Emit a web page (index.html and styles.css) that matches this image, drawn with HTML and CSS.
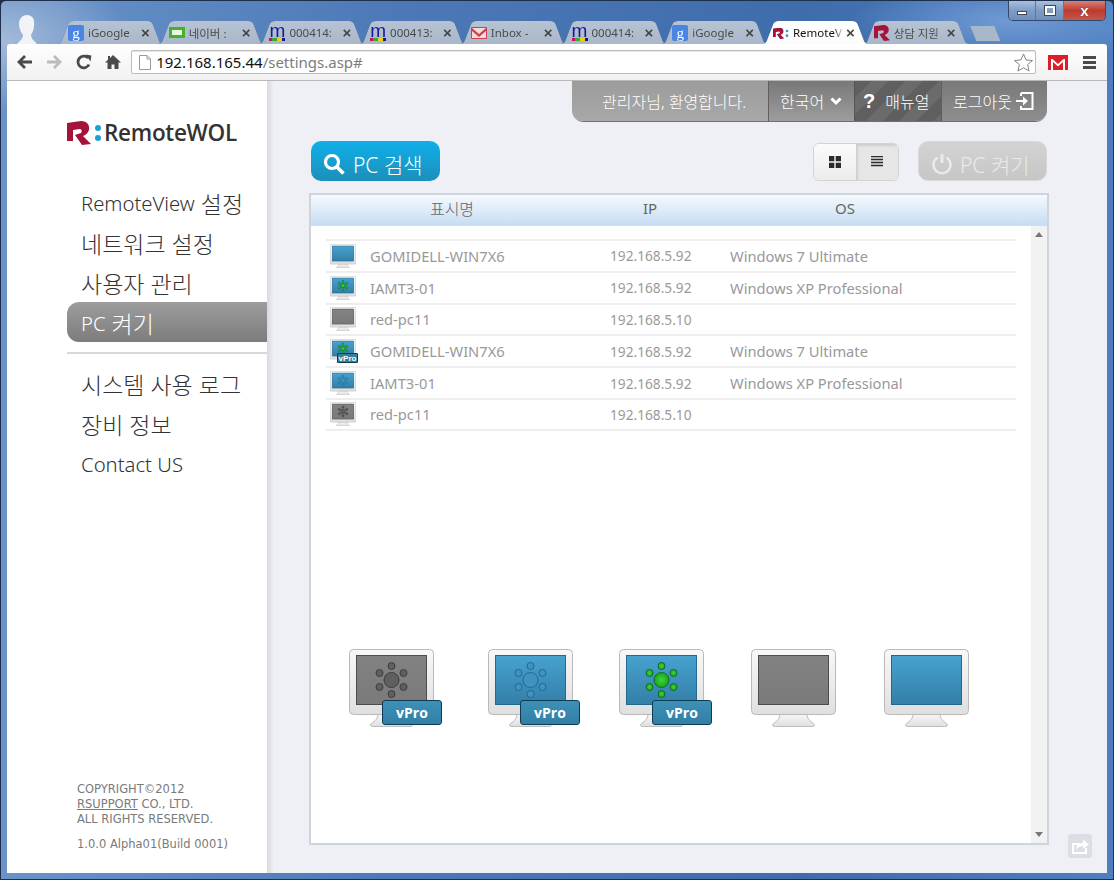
FILE: index.html
```html
<!DOCTYPE html>
<html lang="ko">
<head>
<meta charset="utf-8">
<title>RemoteWOL</title>
<link rel="stylesheet" href="styles.css">
</head>
<body>
<svg class="defs" width="0" height="0">
	<defs>
		<linearGradient id="g-body" x1="0" y1="0" x2="0" y2="1"><stop offset="0" stop-color="#f8f8f8"/><stop offset="1" stop-color="#dfdfdf"/></linearGradient>
		<linearGradient id="g-blue" x1="0" y1="0" x2="0" y2="1"><stop offset="0" stop-color="#47a2cf"/><stop offset="1" stop-color="#337fa8"/></linearGradient>
		<linearGradient id="g-grey" x1="0" y1="0" x2="0" y2="1"><stop offset="0" stop-color="#828282"/><stop offset="1" stop-color="#7a7a7a"/></linearGradient>
		<radialGradient id="g-green"><stop offset="0" stop-color="#3fd63f"/><stop offset="1" stop-color="#18a518"/></radialGradient>
		<symbol id="mon-base" viewBox="0 0 85 78">
			<path d="M29 65 C29 71 24 73 22 75 C21 77 22 77.500 24 77.500 H61 C63 77.500 64 77 63 75 C61 73 56 71 56 65 Z" fill="url(#g-body)" stroke="#bdbdbd"/>
			<rect x="0.500" y="0.500" width="84" height="65" rx="4" fill="url(#g-body)" stroke="#b9b9b9"/>
		</symbol>
		<symbol id="mon-blue" viewBox="0 0 85 78">
			<use href="#mon-base"/>
			<rect x="7.500" y="6.500" width="70" height="49" fill="url(#g-blue)" stroke="#23688e"/>
		</symbol>
		<symbol id="mon-grey" viewBox="0 0 85 78">
			<use href="#mon-base"/>
			<rect x="7.500" y="6.500" width="70" height="49" fill="url(#g-grey)" stroke="#4c4c4c"/>
		</symbol>
		<g id="nodes">
			<circle cx="42.500" cy="17" r="3.500"/><circle cx="42.500" cy="45" r="3.500"/>
			<circle cx="30.500" cy="24" r="3.500"/><circle cx="54.500" cy="24" r="3.500"/>
			<circle cx="30.500" cy="38" r="3.500"/><circle cx="54.500" cy="38" r="3.500"/>
			<circle cx="42.500" cy="31" r="7.500"/>
		</g>
		<symbol id="nodes-grey" viewBox="0 0 85 78"><use href="#nodes" fill="#5f5f5f" stroke="#3d3d3d"/></symbol>
		<symbol id="nodes-blue" viewBox="0 0 85 78"><use href="#nodes" fill="#3f94bf" stroke="#23688e"/></symbol>
		<symbol id="nodes-green" viewBox="0 0 85 78"><use href="#nodes" fill="url(#g-green)" stroke="#0d6e2a"/></symbol>
		<symbol id="r-mark" viewBox="0 0 24 24">
			<path d="M0 2 L14 0 C20 0 23 4 22 9 C21 12 19 14 16 15 L24 23 L15 24 L8 14 L14 12 C15 11 15 8 13 8 L6 9 L6 20 L0 20 Z" fill="#a5123a"/>
		</symbol>
	</defs>
</svg>

<div class="window">
	<div class="tabstrip">
		<svg class="avatar" viewBox="0 0 20 29"><path d="M10 0 C16 0 18 5 17 11 C17 15 15 18 14 20 C14 23 16 25 20 29 H0 C4 25 6 23 6 20 C4 17 2 14 2 9 C2 4 5 0 10 0 Z" fill="#f1f3f6"/></svg>
		<div class="tabs">
			<div class="tab"><span class="fav fav-g">g</span><span class="tab-label">iGoogle</span><span class="tab-x">×</span></div>
			<div class="tab"><span class="fav fav-naver"><i></i></span><span class="tab-label">네이버 :</span><span class="tab-x">×</span></div>
			<div class="tab"><span class="fav fav-m">m</span><span class="tab-label">000414:</span><span class="tab-x">×</span></div>
			<div class="tab"><span class="fav fav-m">m</span><span class="tab-label">000413:</span><span class="tab-x">×</span></div>
			<div class="tab"><svg class="fav" viewBox="0 0 16 12"><path d="M0.500 0.500 H15.500 V11.500 H0.500 Z" fill="#f4dcdc" stroke="#c9434f"/><path d="M1 1 L8 7 L15 1 V4 L8 10 L1 4 Z" fill="#c9434f"/></svg><span class="tab-label">Inbox -</span><span class="tab-x">×</span></div>
			<div class="tab"><span class="fav fav-m">m</span><span class="tab-label">000414:</span><span class="tab-x">×</span></div>
			<div class="tab"><span class="fav fav-g">g</span><span class="tab-label">iGoogle</span><span class="tab-x">×</span></div>
			<div class="tab tab-active"><svg class="fav" viewBox="0 0 24 18"><use href="#r-mark" width="17" height="17" y="1"/><circle cx="21" cy="6" r="2" fill="#1ba0d7"/><circle cx="21" cy="13" r="2" fill="#1ba0d7"/></svg><span class="tab-label">RemoteV</span><span class="tab-x">×</span></div>
			<div class="tab"><svg class="fav" viewBox="0 0 24 24"><use href="#r-mark"/></svg><span class="tab-label">상담 지원</span><span class="tab-x">×</span></div>
			<div class="tab-new"></div>
		</div>
		<div class="winctl">
			<span class="winbtn win-min"><i></i></span>
			<span class="winbtn win-max"><i></i></span>
			<span class="winbtn win-close">x</span>
		</div>
	</div>

	<div class="toolbar">
		<svg class="tool" viewBox="0 0 16 16"><path d="M8 2 L2 8 L8 14 M2 8 H15" fill="none" stroke="#4a4a4a" stroke-width="2.800"/></svg>
		<svg class="tool" viewBox="0 0 16 16"><path d="M8 2 L14 8 L8 14 M14 8 H1" fill="none" stroke="#bcbcbc" stroke-width="2.800"/></svg>
		<svg class="tool" viewBox="0 0 16 16"><path d="M13 10.500 A5.800 5.800 0 1 1 12 4" fill="none" stroke="#4a4a4a" stroke-width="2.800"/><path d="M9 1 H15 V7 Z" fill="#4a4a4a" transform="rotate(8 12 4)"/></svg>
		<svg class="tool" viewBox="0 0 16 16"><path d="M8 1 L16 8.500 H13.500 V15 H9.500 V10.500 H6.500 V15 H2.500 V8.500 H0 L3 5.700 V2 H5 V3.900 Z" fill="#4a4a4a"/></svg>
		<div class="omnibox">
			<svg class="page-ico" viewBox="0 0 12 15"><path d="M0.500 0.500 H8 L11.500 4 V14.500 H0.500 Z M8 0.500 V4 H11.500" fill="#fff" stroke="#9a9a9a"/></svg>
			<span class="url"><b>192.168.165.44</b>/settings.asp#</span>
			<svg class="star" viewBox="0 0 20 20"><path d="M10 1 L12.700 7.300 L19.500 7.900 L14.300 12.300 L15.900 19 L10 15.500 L4.100 19 L5.700 12.300 L0.500 7.900 L7.300 7.300 Z" fill="#fff" stroke="#7d7d7d"/></svg>
		</div>
		<svg class="gmail" viewBox="0 0 20 15"><rect width="20" height="15" fill="#dc1f26"/><path d="M3 15 V4 H4.500 L10 9 L15.500 4 H17 V15 H15 V7 L10 11.500 L5 7 V15 Z" fill="#fff"/></svg>
		<div class="hamburger"><i></i><i></i><i></i></div>
	</div>

	<div class="content">
		<aside class="sidebar">
			<div class="logo">
				<svg class="logo-r" viewBox="0 0 24 24"><use href="#r-mark"/></svg>
				<span class="logo-dots"><i></i><i></i></span>
				<span class="logo-text">RemoteWOL</span>
			</div>
			<ul class="nav">
				<li><span class="en">RemoteView</span>&nbsp;설정</li>
				<li>네트워크 설정</li>
				<li>사용자 관리</li>
				<li class="on"><span class="en">PC</span>&nbsp;켜기</li>
			</ul>
			<div class="nav-line"></div>
			<ul class="nav">
				<li>시스템 사용 로그</li>
				<li>장비 정보</li>
				<li><span class="en">Contact US</span></li>
			</ul>
			<div class="copy">
				<p>COPYRIGHT©2012<br><u>RSUPPORT</u> CO., LTD.<br>ALL RIGHTS RESERVED.</p>
				<p class="ver">1.0.0 Alpha01(Build 0001)</p>
			</div>
		</aside>

		<main class="main">
			<div class="topbar">
				<div class="tb-welcome">관리자님, 환영합니다.</div>
				<div class="tb-lang">한국어 <svg class="chev" viewBox="0 0 12 9"><path d="M1.500 1.500 L6 6 L10.500 1.500" fill="none" stroke="#fff" stroke-width="3"/></svg></div>
				<div class="tb-manual"><span class="q">?</span>매뉴얼</div>
				<div class="tb-logout">로그아웃 <svg class="logout-ico" viewBox="0 0 18 18"><path d="M5 1 H16.500 V17 H5 V14 M5 4 V1" fill="none" stroke="#fff" stroke-width="2"/><path d="M0 8 H7 V4.500 L12 9 L7 13.500 V10 H0 Z" fill="#fff"/></svg></div>
			</div>

			<div class="actions">
				<button class="btn btn-search">
					<svg class="ico-search" viewBox="0 0 22 22"><circle cx="9" cy="9" r="6.500" fill="none" stroke="#fff" stroke-width="3.200"/><path d="M14 14 L20.500 20.500" stroke="#fff" stroke-width="3.600"/></svg>
					PC 검색
				</button>
				<div class="viewtoggle">
					<span class="vt"><svg viewBox="0 0 12 12"><path d="M0 0 H5.300 V5.300 H0 Z M6.700 0 H12 V5.300 H6.700 Z M0 6.700 H5.300 V12 H0 Z M6.700 6.700 H12 V12 H6.700 Z" fill="#2b2b2b"/></svg></span>
					<span class="vt vt-on"><svg viewBox="0 0 12 12"><path d="M0 0.500 H12 M0 3.500 H12 M0 6.500 H12 M0 9.500 H12" stroke="#2b2b2b" stroke-width="1.500"/></svg></span>
				</div>
				<button class="btn btn-power">
					<svg class="ico-power" viewBox="0 0 22 22"><path d="M6.500 4.500 A8.500 8.500 0 1 0 15.500 4.500" fill="none" stroke="#eaeaea" stroke-width="2.600"/><path d="M11 1 V10" stroke="#eaeaea" stroke-width="3"/></svg>
					PC 켜기
				</button>
			</div>

			<section class="panel">
				<div class="thead"><span class="th-ko">표시명</span><span>IP</span><span>OS</span></div>
				<div class="tbody">
					<div class="listarea">
						<div class="row">
							<svg class="mon-s" viewBox="0 0 85 78"><use href="#mon-blue"/></svg>
							<span>GOMIDELL-WIN7X6</span><span class="ip">192.168.5.92</span><span>Windows 7 Ultimate</span>
						</div>
						<div class="row">
							<svg class="mon-s" viewBox="0 0 85 78"><use href="#mon-blue"/><use href="#nodes-green"/></svg>
							<span>IAMT3-01</span><span class="ip">192.168.5.92</span><span>Windows XP Professional</span>
						</div>
						<div class="row">
							<svg class="mon-s" viewBox="0 0 85 78"><use href="#mon-grey"/></svg>
							<span>red-pc11</span><span class="ip">192.168.5.10</span><span></span>
						</div>
						<div class="row">
							<span class="mon-wrap">
								<svg class="mon-s" viewBox="0 0 85 78"><use href="#mon-blue"/><use href="#nodes-green"/></svg>
								<em class="vpro-s">vPro</em>
							</span>
							<span>GOMIDELL-WIN7X6</span><span class="ip">192.168.5.92</span><span>Windows 7 Ultimate</span>
						</div>
						<div class="row">
							<svg class="mon-s" viewBox="0 0 85 78"><use href="#mon-blue"/><use href="#nodes-blue"/></svg>
							<span>IAMT3-01</span><span class="ip">192.168.5.92</span><span>Windows XP Professional</span>
						</div>
						<div class="row">
							<svg class="mon-s" viewBox="0 0 85 78"><use href="#mon-grey"/><use href="#nodes-grey"/></svg>
							<span>red-pc11</span><span class="ip">192.168.5.10</span><span></span>
						</div>

						<div class="legend">
							<div class="mon-l m1"><svg viewBox="0 0 85 78"><use href="#mon-grey"/><use href="#nodes-grey"/></svg><em class="vpro">vPro</em></div>
							<div class="mon-l m2"><svg viewBox="0 0 85 78"><use href="#mon-blue"/><use href="#nodes-blue"/></svg><em class="vpro">vPro</em></div>
							<div class="mon-l m3"><svg viewBox="0 0 85 78"><use href="#mon-blue"/><use href="#nodes-green"/></svg><em class="vpro">vPro</em></div>
							<div class="mon-l m4"><svg viewBox="0 0 85 78"><use href="#mon-grey"/></svg></div>
							<div class="mon-l m5"><svg viewBox="0 0 85 78"><use href="#mon-blue"/></svg></div>
						</div>
					</div>
					<div class="scrollbar">
						<svg viewBox="0 0 8 5"><path d="M4 0 L8 5 H0 Z" fill="#777"/></svg>
						<svg viewBox="0 0 8 5"><path d="M4 5 L8 0 H0 Z" fill="#777"/></svg>
					</div>
				</div>
			</section>

			<div class="share"><svg viewBox="0 0 24 24"><path d="M4 9 H12 V11 H6 V18 H17 V14 H19 V20 H4 Z" fill="#fff"/><path d="M8 16 C8 11 11 9 15 9 V5.500 L21 10.500 L15 15 V12 C12 12 10 13 8 16 Z" fill="#fff"/></svg></div>
		</main>
	</div>
</div>
</body>
</html>
```

FILE: styles.css
```css
* { box-sizing: border-box; }

html, body { margin: 0; padding: 0; background: #1d2f4b; }

body { font-family: "Noto Sans", "Noto Sans CJK KR", sans-serif; overflow: hidden; }

.defs { position: absolute; }

ul { list-style: none; margin: 0; padding: 0; }
p { margin: 0; }

.window {
	width: 1114px;
	height: 880px;
	padding: 0 6px 6px;
	display: flex;
	flex-direction: column;
	border: 1px solid #1d2f4b;
	border-radius: 6px 6px 0 0;
	background:
		radial-gradient(ellipse 130px 70px at 0 40px, #a4bbd9, rgba(164,187,217,0)),
		radial-gradient(ellipse 160px 40px at 1010px 20px, #6f9bd4, rgba(111,155,212,0)),
		linear-gradient(90deg, #6a93c9 0, #4c78b6 400px, #3f6cab 800px, #4f7fc0 1114px);
}

/* tab strip */
.tabstrip {
	height: 43px;
	flex: none;
	margin: 0 -6px;
	padding-left: 16px;
	display: flex;
	align-items: flex-end;
}

.avatar { width: 20px; height: 29px; margin-right: 20px; flex: none; }

.tabs { display: flex; align-items: flex-end; height: 23px; }

.tab {
	position: relative;
	width: 107px;
	height: 23px;
	margin-right: -6.300px;
	padding: 0 0 0 11px;
	display: flex;
	align-items: center;
	flex: none;
	font-size: 11.500px;
	color: #4a4a4a;
	filter: drop-shadow(0 0 0.6px #3b5a86);
}

.tab::before {
	content: "";
	position: absolute;
	inset: 0;
	background: linear-gradient(#b7c3d3, #a9b7ca);
	clip-path: path("M0 23 C4 23 5 20 6 17 L11 4 C12 1 14 0 17 0 L90 0 C93 0 95 1 96 4 L101 17 C102 20 103 23 107 23 Z");
}

.tab > * { position: relative; }

.tab-active { z-index: 2; color: #111; }
.tab-active::before { background: linear-gradient(#fff, #fbfbfb); }

.fav {
	width: 16px;
	height: 16px;
	margin-right: 4px;
	flex: none;
	display: flex;
	align-items: center;
	justify-content: center;
	font-style: normal;
}

.fav-g { background: #4a85e6; color: #fff; border-radius: 2px; font: 15px/12px "Liberation Serif", serif; }

.fav-naver { background: #46b12d; border: 2px solid #46b12d; height: 11px; }
.fav-naver i { display: block; width: 10px; height: 5px; background: #e8f6e0; }

.fav-m {
	color: #17179a;
	font: 19px/12px "Liberation Sans", sans-serif;
	height: 16px;
	align-items: flex-start;
	border-bottom: 3px solid;
	border-image: linear-gradient(90deg, #c2185b 25%, #3aa83a 25% 50%, #e6d21c 50% 75%, #17179a 75%) 1;
}

.tab-label {
	width: 51px;
	white-space: nowrap;
	overflow: hidden;
	-webkit-mask-image: linear-gradient(90deg, #000 80%, transparent);
}

.tab-x { margin-left: 2px; font: bold 15px "Liberation Sans", sans-serif; color: #444; }

.tab-new {
	width: 30px;
	height: 15px;
	margin: 0 0 3px 7px;
	background: #a9b7ca;
	clip-path: path("M0 0 H24 L30 15 H6 Z");
	flex: none;
}

.winctl {
	width: 98px;
	height: 20px;
	margin: 0 7px 0 auto;
	align-self: flex-start;
	display: flex;
	flex: none;
	border: 1px solid #33496b;
	border-top: 0;
	border-radius: 0 0 5px 5px;
	overflow: hidden;
}

.winbtn {
	display: flex;
	align-items: center;
	justify-content: center;
	width: 27px;
	background: linear-gradient(#a9c0dd, #7e9cc4 50%, #6f8fbc);
	border-right: 1px solid #5a779f;
}

.win-min i { width: 10px; height: 4px; margin-top: 5px; background: #fff; border: 1px solid #445; }
.win-max { width: 28px; }
.win-max i { width: 10px; height: 9px; background: transparent; border: 2px solid #fff; outline: 1px solid #445; }
.win-close {
	flex: 1;
	border: 0;
	color: #fff;
	font: bold 15px/1 "Liberation Sans", sans-serif;
	text-shadow: 0 0 1px #400;
	background: linear-gradient(#d9827a, #bd3a30 50%, #c2584c);
}

/* chrome toolbar */
.toolbar {
	height: 37px;
	flex: none;
	padding: 0 11px 0 10px;
	display: flex;
	align-items: center;
	gap: 13.300px;
	background: linear-gradient(#ffffff, #f1f1f1);
	border-bottom: 1px solid #b9b9b9;
	border-radius: 3px 3px 0 0;
}

.tool { width: 16px; height: 16px; flex: none; }

.omnibox {
	flex: 1;
	height: 24px;
	margin: 0 -2px 0 -3px;
	padding: 0 2px 0 7px;
	display: flex;
	align-items: center;
	background: #fff;
	border: 1px solid #bdbdbd;
	border-radius: 2px;
	box-shadow: inset 0 1px 0 #e6e6e6;
}

.page-ico { width: 12px; height: 15px; margin-right: 5px; flex: none; }

.url {
	flex: 1;
	font: 15px "Noto Sans", sans-serif;
	color: #7d7d7d;
}

.url b { font-weight: 400; color: #111; }

.star { width: 19px; height: 19px; flex: none; }

.gmail { width: 20px; height: 15px; flex: none; }

.hamburger { width: 13px; display: flex; flex-direction: column; gap: 2px; margin-left: 2px; flex: none; }
.hamburger i { height: 3px; background: #4a4a4a; }

/* page */
.content {
	flex: 1;
	min-height: 0;
	display: flex;
	background: #eef0f5;
}

.sidebar {
	width: 260px;
	flex: none;
	padding-top: 40px;
	display: flex;
	flex-direction: column;
	background: #fff;
}

.logo { height: 24px; margin: 0 0 37px 60px; display: flex; align-items: center; }
.logo-r { width: 24px; height: 24px; flex: none; }
.logo-dots { width: 13px; height: 16px; display: flex; flex-direction: column; justify-content: space-between; align-items: center; }
.logo-dots i { width: 6px; height: 6px; border-radius: 50%; background: #1ba0d7; }
.logo-text { font: 600 22.500px/24px "Open Sans", sans-serif; color: #333; letter-spacing: -0.300px; }

.nav li {
	height: 40px;
	margin-left: 60px;
	padding: 2px 0 0 14px;
	display: flex;
	align-items: center;
	font-size: 23px;
	font-weight: 300;
	color: #333;
}

.nav .en { font-size: 20.300px; }

.nav li.on {
	color: #fff;
	background: linear-gradient(#9d9d9d, #7c7c7c);
	border-radius: 12px 0 0 12px;
}

.nav-line { height: 2px; margin: 10px 0 9px 60px; background: #d8d8d8; }

.copy {
	margin-top: auto;
	padding: 0 0 21px 70px;
	font: 11.500px/15px "DejaVu Sans", sans-serif;
	color: #7a7a7a;
}

.ver { margin-top: 10px; }

.main {
	position: relative;
	flex: 1;
	min-width: 0;
	padding: 0 58px 0 42px;
	background: linear-gradient(90deg, #d9dae0, #eef0f5 7px);
}

.topbar {
	width: 475px;
	height: 41px;
	margin-left: 263px;
	display: flex;
	border-radius: 0 0 12px 12px;
	overflow: hidden;
	color: #fff;
	font-size: 16px;
	font-weight: 300;
	border-bottom: 1px solid #6f6f6f;
}

.topbar > div { display: flex; align-items: center; }

.tb-welcome { width: 197px; padding-left: 30px; background: linear-gradient(#9c9c9c, #a8a8a8); border-right: 1px solid #5f5f5f; }
.tb-lang { width: 85px; padding-left: 11px; background: linear-gradient(#787878, #9d9d9d); gap: 4px; }
.chev { width: 12px; height: 9px; margin-left: 2px; }
.tb-manual {
	width: 87px;
	padding-left: 8px;
	background: repeating-linear-gradient(135deg, #5f5f5f 0 12px, #6b6b6b 12px 24px);
	border-left: 1px solid #555;
}
.q { font: bold 20px "Liberation Sans", sans-serif; margin-right: 10px; }
.tb-logout { flex: 1; padding-left: 11px; background: linear-gradient(#797979, #8e8e8e); border-left: 1px solid #5f5f5f; gap: 2px; }
.logout-ico { width: 18px; height: 18px; margin-left: 2px; }

.actions {
	height: 40px;
	margin: 19px 2px 12px;
	display: flex;
	align-items: center;
}

.btn {
	height: 40px;
	width: 129px;
	padding: 5px 0 0 12px;
	display: flex;
	align-items: center;
	border: 0;
	border-radius: 10px;
	font-family: inherit;
	font-size: 21px;
	font-weight: 300;
	white-space: nowrap;
}

.btn-search { color: #fff; background: linear-gradient(#0fb0ea, #1c8fb9); }
.ico-search { width: 22px; height: 22px; margin-right: 8px; }

.btn-power { color: #eaeaea; background: linear-gradient(#d3d3d3, #c6c6c6); border: 1px solid #d8d8d8; }
.ico-power { width: 22px; height: 22px; margin-right: 7px; }

.viewtoggle {
	margin: 2px 19px 0 auto;
	width: 86px;
	height: 38px;
	display: flex;
	border: 1px solid #d3d3d3;
	border-radius: 6px;
	overflow: hidden;
}

.vt { flex: 1; display: flex; align-items: center; justify-content: center; background: linear-gradient(#fbfbfb, #ececec); }
.vt svg { width: 12px; height: 12px; }
.vt-on { background: #e6e6e6; box-shadow: inset 2px 2px 2px #cfcfcf; }

.panel {
	height: 652px;
	display: flex;
	flex-direction: column;
	border: 2px solid #ccd5dd;
	background: #fff;
}

.thead {
	height: 31px;
	flex: none;
	padding-bottom: 4px;
	display: grid;
	grid-template-columns: 282px 114px 276px;
	align-items: center;
	text-align: center;
	font-size: 15px;
	color: #666;
	background: linear-gradient(#f5f9fd, #c8ddf3);
	border-bottom: 1px solid #d5dde5;
}

.th-ko { font-size: 16px; font-weight: 300; }

.tbody { flex: 1; min-height: 0; display: flex; }

.listarea { flex: 1; padding: 13px 0 0 15px; }

.row {
	width: 690px;
	height: 31.800px;
	padding-left: 4px;
	display: grid;
	grid-template-columns: 40px 240px 120px 1fr;
	align-items: center;
	font-size: 14.700px;
	color: #999;
	border-top: 2px solid #eeeeee;
}

.row .ip { font-size: 13.700px; }

.row:nth-child(6) { height: 33px; border-bottom: 2px solid #eeeeee; }

.mon-s { width: 26px; height: 24px; display: block; stroke-width: 1.800; }

.mon-wrap { position: relative; display: block; width: 26px; height: 24px; }

.vpro-s {
	position: absolute;
	left: 7px;
	top: 14px;
	width: 21px;
	height: 10px;
	font: bold 8px/9px "Liberation Sans", sans-serif;
	text-align: center;
	color: #fff;
	background: #33809f;
	border: 1px solid #0d3d55;
	border-radius: 1px;
}

.legend { display: flex; margin-top: 218px; }

.mon-l { position: relative; width: 85px; height: 78px; flex: none; }
.mon-l svg { display: block; width: 85px; height: 78px; }
.m1 { margin-left: 23px; }
.m2 { margin-left: 54px; }
.m3 { margin-left: 46px; }
.m4 { margin-left: 47px; }
.m5 { margin-left: 48px; }

.vpro {
	position: absolute;
	left: 33px;
	top: 51px;
	width: 60px;
	height: 25px;
	font: bold 14px/23px "Open Sans", sans-serif;
	text-align: center;
	color: #fff;
	background: linear-gradient(#3d90b6, #327fa6);
	border: 1px solid #0d3d55;
	border-radius: 3px;
}

.m2 .vpro { left: 32px; }

.scrollbar {
	width: 16px;
	flex: none;
	padding: 6px 4px;
	display: flex;
	flex-direction: column;
	justify-content: space-between;
	background: #f2f2f2;
}

.scrollbar svg { width: 8px; height: 5px; display: block; }

.share {
	position: absolute;
	left: 801px;
	top: 753px;
	width: 24px;
	height: 24px;
	background: #dcdee3;
	border-radius: 3px;
}

.share svg { display: block; }
```
